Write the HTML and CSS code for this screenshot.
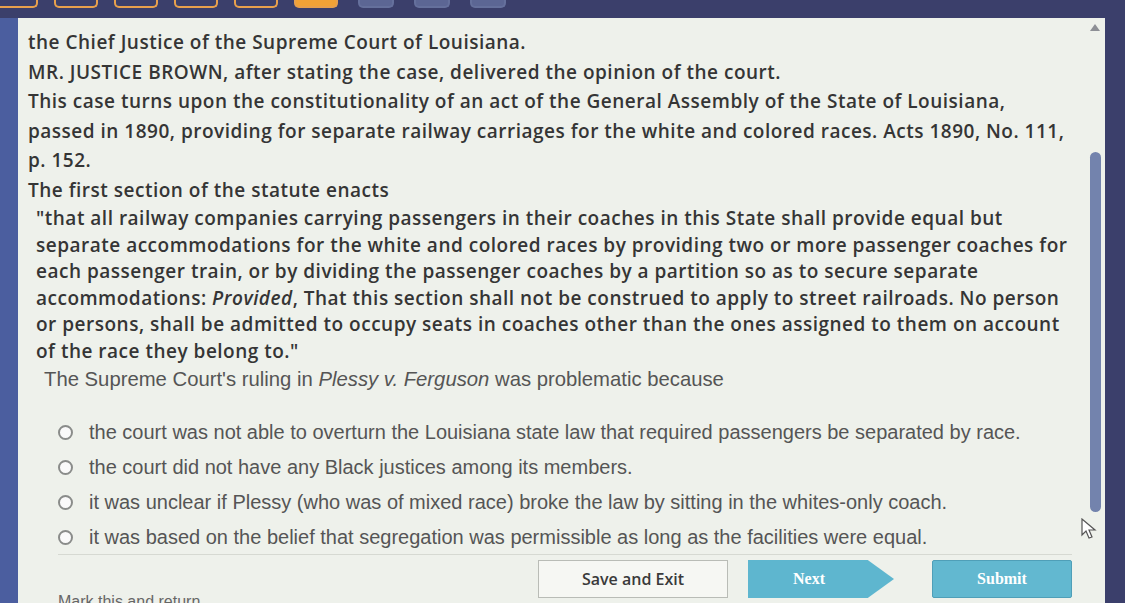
FILE: index.html
```html
<!DOCTYPE html>
<html lang="en">
<head>
    <meta charset="UTF-8">
    <meta name="viewport" content="width=device-width, initial-scale=1.0">
    <title>Plessy v. Ferguson - Question</title>
    <link rel="stylesheet" href="styles.css">
</head>
<body>
    <div class="topbar">
        <span class="tab done"></span>
        <span class="tab done"></span>
        <span class="tab done"></span>
        <span class="tab done"></span>
        <span class="tab done"></span>
        <span class="tab current"></span>
        <span class="tab todo"></span>
        <span class="tab todo"></span>
        <span class="tab todo"></span>
    </div>

    <div class="frame">
        <div class="side"></div>
        <div class="panel">
            <div class="passage">
                <p>the Chief Justice of the Supreme Court of Louisiana.</p>
                <p>MR. JUSTICE BROWN, after stating the case, delivered the opinion of the court.</p>
                <p>This case turns upon the constitutionality of an act of the General Assembly of the State of Louisiana,<br>
                passed in 1890, providing for separate railway carriages for the white and colored races. Acts 1890, No. 111,<br>
                p. 152.</p>
                <p>The first section of the statute enacts</p>
                <p class="quote">"that all railway companies carrying passengers in their coaches in this State shall provide equal but<br>
                separate accommodations for the white and colored races by providing two or more passenger coaches for<br>
                each passenger train, or by dividing the passenger coaches by a partition so as to secure separate<br>
                accommodations: <em>Provided</em>, That this section shall not be construed to apply to street railroads. No person<br>
                or persons, shall be admitted to occupy seats in coaches other than the ones assigned to them on account<br>
                of the race they belong to."</p>
            </div>

            <p class="question">The Supreme Court's ruling in <em>Plessy v. Ferguson</em> was problematic because</p>

            <div class="options">
                <label class="option"><span class="radio"></span>the court was not able to overturn the Louisiana state law that required passengers be separated by race.</label>
                <label class="option"><span class="radio"></span>the court did not have any Black justices among its members.</label>
                <label class="option"><span class="radio"></span>it was unclear if Plessy (who was of mixed race) broke the law by sitting in the whites-only coach.</label>
                <label class="option"><span class="radio"></span>it was based on the belief that segregation was permissible as long as the facilities were equal.</label>
            </div>

            <div class="footer">
                <span class="mark">Mark this and return</span>
                <div class="buttons">
                    <button class="btn save">Save and Exit</button>
                    <button class="btn next">Next</button>
                    <button class="btn submit">Submit</button>
                </div>
            </div>

            <!-- scrollbar overlay -->
            <span class="scroll-up"></span>
            <span class="scroll-thumb"></span>
            <svg class="cursor" width="16" height="22" viewBox="0 0 16 22">
                <path d="M1 1 L1 17 L5 13 L8 20 L11 19 L8 12 L14 12 Z" fill="#fff" stroke="#555" stroke-width="1.2"/>
            </svg>
        </div>
        <div class="edge"></div>
    </div>
</body>
</html>
```

FILE: styles.css
```css
body {
    margin: 0;
    height: 603px;
    overflow: hidden;
    background-color: #3b3f6b;
    font-family: "Open Sans", Lato, sans-serif;
}

.topbar {
    height: 18px;
    display: flex;
    gap: 16px;
    margin-left: -6px;
}

.tab {
    width: 40px;
    height: 6px;
    border: 2px solid #e8a04c;
    border-top: none;
    border-radius: 0 0 5px 5px;
}

.tab.current {
    background-color: #f2a236;
}

.tab.todo {
    width: 32px;
    margin-left: 4px;
    border-color: #65709c;
    background-color: #5c6694;
}

.frame {
    display: flex;
    height: 585px;
}

.side {
    width: 18px;
    background-color: #4b5e9f;
}

.edge {
    width: 20px;
}

.panel {
    flex: 1;
    position: relative;
    background-color: #eef1eb;
    padding: 10px 33px 0 10px;
    color: #353535;
    overflow: hidden;
}

.passage {
    white-space: nowrap;
}

.passage p {
    margin: 0;
    font-size: 19px;
    font-weight: 600;
    letter-spacing: 0.5px;
    line-height: 29.5px;
}

.passage .quote {
    padding-left: 8px;
    line-height: 26.5px;
}

.question {
    margin: 2px 0 0 16px;
    font-family: "Liberation Sans", Arial, sans-serif;
    font-size: 20.3px;
    line-height: 26px;
    color: #555;
}

.options {
    display: flex;
    flex-direction: column;
    gap: 9px;
    margin: 27px 0 0 30px;
}

.option {
    display: flex;
    align-items: center;
    gap: 16px;
    font-family: "Liberation Sans", Arial, sans-serif;
    font-size: 20px;
    line-height: 26px;
    color: #555;
    white-space: nowrap;
}

.radio {
    width: 11px;
    height: 11px;
    border: 2px solid #8a8c8a;
    border-radius: 50%;
    background-color: #fafafa;
    flex-shrink: 0;
}

.footer {
    margin: 4px 0 0 30px;
    border-top: 1px solid #d6d9d2;
    display: flex;
    justify-content: space-between;
    align-items: flex-start;
}

.mark {
    margin-top: 38px;
    font-family: "Liberation Sans", Arial, sans-serif;
    font-size: 16px;
    color: #666;
}

.buttons {
    display: flex;
    gap: 20px;
    margin-top: 5px;
}

.btn {
    height: 38px;
    font-size: 16px;
    cursor: pointer;
}

.save {
    width: 190px;
    background-color: #f6f7f3;
    border: 1px solid #b9bcb6;
    font-family: "Open Sans", sans-serif;
    font-weight: 600;
    color: #3a3a3a;
}

.next {
    width: 146px;
    border: none;
    color: #fff;
    font-family: "Liberation Serif", serif;
    font-weight: 700;
    background-color: #5eb6cf;
    clip-path: polygon(0 0, 82% 0, 100% 50%, 82% 100%, 0 100%);
    padding-right: 30px;
}

.submit {
    width: 140px;
    margin-left: 18px;
    border: 1px solid #4f9fb8;
    border-radius: 2px;
    color: #fff;
    font-family: "Liberation Serif", serif;
    font-weight: 700;
    background-color: #62b8d0;
}

.scroll-up {
    position: absolute;
    top: 6px;
    right: 5px;
    width: 0;
    height: 0;
    border-left: 5px solid transparent;
    border-right: 5px solid transparent;
    border-bottom: 7px solid #8d8f95;
}

.scroll-thumb {
    position: absolute;
    top: 134px;
    right: 4px;
    width: 11px;
    height: 360px;
    border-radius: 6px;
    background-color: #7383ad;
}

.cursor {
    position: absolute;
    top: 500px;
    right: 8px;
}
```
